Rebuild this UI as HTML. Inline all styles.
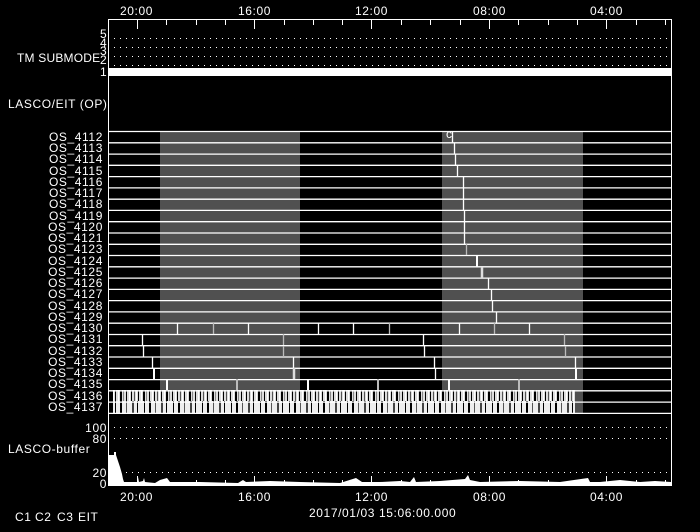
<!DOCTYPE html>
<html><head><meta charset="utf-8"><style>
html,body{margin:0;padding:0;background:#000;}
svg{display:block;}
text{font-family:"Liberation Sans",sans-serif;font-size:12px;letter-spacing:0.6px;fill:#fff;}
</style></head><body>
<svg width="700" height="532" viewBox="0 0 700 532" xmlns="http://www.w3.org/2000/svg">
<defs>
<pattern id="dots" x="114" y="0" width="6" height="1" patternUnits="userSpaceOnUse"><rect width="1" height="1" fill="#fff"/></pattern>
<pattern id="bc1" x="113" y="0" width="23" height="12" patternUnits="userSpaceOnUse">
<rect width="23" height="12" fill="#ddd"/>
<rect x="0" width="1" height="12" fill="#fff"/><rect x="2" width="1" height="12" fill="#000"/><rect x="5" width="1" height="12" fill="#fff"/><rect x="7" width="2" height="12" fill="#000"/><rect x="10" width="1" height="12" fill="#888"/><rect x="13" width="1" height="12" fill="#000"/><rect x="16" width="1" height="12" fill="#fff"/><rect x="18" width="1" height="12" fill="#000"/><rect x="21" width="1" height="12" fill="#555"/>
</pattern>
<pattern id="bc2" x="113" y="0" width="29" height="12" patternUnits="userSpaceOnUse">
<rect width="29" height="12" fill="#eee"/>
<rect x="2" width="1" height="12" fill="#000"/><rect x="7" width="2" height="12" fill="#000"/><rect x="13" width="1" height="12" fill="#555"/><rect x="19" width="2" height="12" fill="#444"/><rect x="24" width="1" height="12" fill="#000"/>
</pattern>
</defs>

<text x="120" y="15">20:00</text>
<text x="238" y="15">16:00</text>
<text x="355" y="15">12:00</text>
<text x="473" y="15">08:00</text>
<text x="590" y="15">04:00</text>

<rect x="108.5" y="19.5" width="563" height="466" fill="none" stroke="#fff" stroke-width="1"/>

<g stroke="#fff" stroke-width="1">
<path d="M137.5 20v9M254.5 20v9M371.5 20v9M489.5 20v9M606.5 20v9"/>
<path d="M166.5 20v5M196.5 20v5M225.5 20v5M284.5 20v5M313.5 20v5M342.5 20v5M401.5 20v5M430.5 20v5M460.5 20v5M518.5 20v5M548.5 20v5M577.5 20v5M636.5 20v5M665.5 20v5"/>
<path d="M137.5 485v-9M254.5 485v-9M371.5 485v-9M489.5 485v-9M606.5 485v-9"/>
<path d="M166.5 485v-5M196.5 485v-5M225.5 485v-5M284.5 485v-5M313.5 485v-5M342.5 485v-5M401.5 485v-5M430.5 485v-5M460.5 485v-5M518.5 485v-5M548.5 485v-5M577.5 485v-5M636.5 485v-5M665.5 485v-5"/>
</g>

<rect x="109" y="38" width="562" height="1" fill="url(#dots)"/>
<rect x="109" y="47" width="562" height="1" fill="url(#dots)"/>
<rect x="109" y="56" width="562" height="1" fill="url(#dots)"/>
<rect x="109" y="65" width="562" height="1" fill="url(#dots)"/>
<rect x="109" y="68" width="562" height="8" fill="#fff"/>
<text x="100" y="38" font-size="10">5</text>
<text x="100" y="47" font-size="10">4</text>
<text x="100" y="55" font-size="10">3</text>
<text x="100" y="64" font-size="10">2</text>
<text x="100" y="76" font-size="10">1</text>
<text x="17" y="62" style="letter-spacing:0.2px">TM SUBMODE</text>
<text x="8" y="108">LASCO/EIT (OP)</text>

<rect x="160" y="131" width="140" height="282" fill="#505050"/>
<rect x="442" y="131" width="141" height="282" fill="#505050"/>

<rect x="113" y="390" width="462" height="11" fill="url(#bc1)"/>
<rect x="113" y="401" width="462" height="12" fill="url(#bc2)"/>

<g stroke="#fff" stroke-width="1.3">
<path d="M109 131.5H671M109 142.8H671M109 154.1H671M109 165.3H671M109 176.6H671M109 187.9H671M109 199.2H671M109 210.4H671M109 221.7H671M109 233H671M109 244.3H671M109 255.5H671M109 266.8H671M109 278.1H671M109 289.4H671M109 300.6H671M109 311.9H671M109 323.2H671M109 334.5H671M109 345.7H671M109 357H671M109 368.3H671M109 379.6H671M109 390.8H671M109 402.1H671M109 413.4H671"/>
</g>

<g stroke-width="1.3">
<path stroke="#fff" d="M452.5 132v11M454.5 143v11M455.5 154v11M457.5 165v11M463.5 177v11M463.5 188v11M463.5 199v11M464.5 210v12M464.5 222v11M464.5 233v11"/>
<path stroke="#bbb" d="M466.5 244v11"/>
<path stroke="#fff" stroke-width="2" d="M477 255v12"/>
<path stroke="#ddd" stroke-width="2.5" d="M482 267v11"/>
<path stroke="#fff" d="M488.5 278v11M491.5 289v11M492.5 301v11M496.5 312v11"/>
<path stroke="#fff" d="M177.5 323v11M248.5 323v11M318.5 323v11M353.5 323v11M459.5 323v11M529.5 323v11"/>
<path stroke="#bbb" d="M213.5 323v11M389.5 323v11M494.5 323v11"/>
<path stroke="#fff" d="M142.5 334v11M423.5 334v11M143.5 346v11M424.5 346v11M152.5 357v11M293.5 357v11M434.5 357v11M575.5 357v11M435.5 368v11"/>
<path stroke="#bbb" d="M283.5 334v11M564.5 334v11M283.5 346v11M565.5 346v11"/>
<path stroke="#fff" stroke-width="2" d="M154 368v11M576 368v11M167 379v11M308 379v11M449 379v11"/>
<path stroke="#ddd" stroke-width="2.5" d="M294 368v11"/>
<path stroke="#bbb" stroke-width="2" d="M237 379v11M378 379v11M519 379v11"/>
</g>
<text x="446" y="138" font-size="8">c</text>

<g text-anchor="end">
<text x="103" y="141">OS_4112</text>
<text x="103" y="152">OS_4113</text>
<text x="103" y="163">OS_4114</text>
<text x="103" y="175">OS_4115</text>
<text x="103" y="186">OS_4116</text>
<text x="103" y="197">OS_4117</text>
<text x="103" y="208">OS_4118</text>
<text x="103" y="220">OS_4119</text>
<text x="103" y="231">OS_4120</text>
<text x="103" y="242">OS_4121</text>
<text x="103" y="253">OS_4123</text>
<text x="103" y="265">OS_4124</text>
<text x="103" y="276">OS_4125</text>
<text x="103" y="287">OS_4126</text>
<text x="103" y="298">OS_4127</text>
<text x="103" y="310">OS_4128</text>
<text x="103" y="321">OS_4129</text>
<text x="103" y="332">OS_4130</text>
<text x="103" y="343">OS_4131</text>
<text x="103" y="355">OS_4132</text>
<text x="103" y="366">OS_4133</text>
<text x="103" y="377">OS_4134</text>
<text x="103" y="388">OS_4135</text>
<text x="103" y="400">OS_4136</text>
<text x="103" y="411">OS_4137</text>
</g>

<rect x="114" y="427" width="557" height="1" fill="url(#dots)"/>
<rect x="114" y="438" width="557" height="1" fill="url(#dots)"/>
<rect x="114" y="472" width="557" height="1" fill="url(#dots)"/>
<g text-anchor="end">
<text x="107" y="432">100</text>
<text x="107" y="443">80</text>
<text x="107" y="477">20</text>
<text x="107" y="488">0</text>
</g>
<text x="8" y="453">LASCO-buffer</text>
<path fill="#fff" d="M109 485V455H114V452H116V455L118 461L120 467L122 474L123 479L124 482L137 482L138 477L139 482L143 481L144 478L145 482L155 483L160 480L167 478L170 482L200 482L238 483L243 480L246 482L270 481L300 482L340 483L356 478L362 482L380 482L400 481L410 482L414 477L416 482L440 481L465 479L468 475L470 480L480 482L520 481L560 482L588 478L590 482L600 482L620 480L640 482L655 481L671 482V485Z"/>

<text x="120" y="501">20:00</text>
<text x="238" y="501">16:00</text>
<text x="355" y="501">12:00</text>
<text x="473" y="501">08:00</text>
<text x="590" y="501">04:00</text>
<text x="309" y="517">2017/01/03 15:06:00.000</text>
<text x="15" y="521" font-size="10">C1</text>
<text x="35" y="521" font-size="10">C2</text>
<text x="57" y="521" font-size="10">C3</text>
<text x="78" y="521" font-size="10">EIT</text>
</svg>
</body></html>
